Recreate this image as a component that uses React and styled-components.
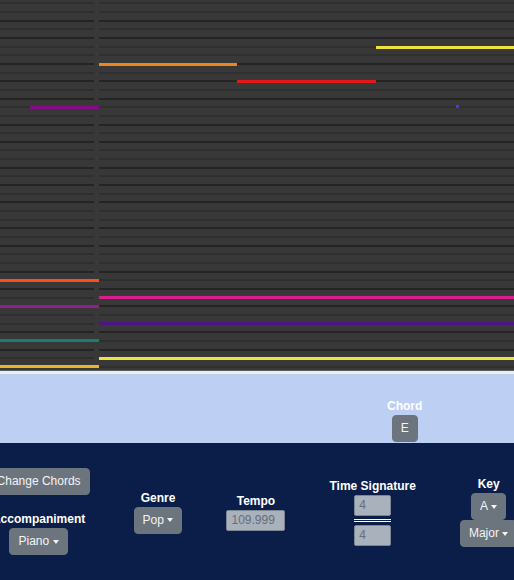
import React from "react";
import styled, { createGlobalStyle } from "styled-components";

const GlobalStyle = createGlobalStyle`
  html, body { margin: 0; padding: 0; background: #0b1e4a; overflow: hidden; }
  body { font-family: "Liberation Sans", Arial, sans-serif; }
  * { box-sizing: border-box; }
`;

const Page = styled.div`
  width: 514px;
  display: flex;
  flex-direction: column;
`;

const Roll = styled.div`
  position: relative;
  height: 370px;
  overflow: hidden;
  background: #383838;
  display: flex;
  gap: 5px;
`;

const Pane = styled.div`
  width: ${(p) => (p.$w ? `${p.$w}px` : "auto")};
  flex: ${(p) => (p.$w ? "none" : "1")};
  display: flex;
  flex-direction: column;
  margin-top: -1px;
`;

const Lane = styled.div`
  height: 8.6667px;
  flex-shrink: 0;
  display: flex;
  align-items: center;
  &::after {
    content: "";
    width: 100%;
    height: 2px;
    background: ${(p) => (p.$black ? "#242424" : "#2f2f2f")};
  }
`;

const Note = styled.div`
  position: absolute;
  height: 3px;
  background: ${(p) => p.$color};
`;

const Divider = styled.div`
  height: 4px;
  background: #eceef1;
  border-top: 1px solid #5a5a5a;
`;

const ChordBand = styled.div`
  height: 69px;
  background: #bdd0f4;
  display: flex;
  align-items: flex-end;
  padding-left: 387px;
  padding-bottom: 1px;
`;

const Panel = styled.div`
  height: 137px;
  background: #0b1e4a;
  display: flex;
  align-items: center;
  justify-content: center;
  gap: 44px;
  padding-right: 9px;
  overflow: hidden;
`;

const Field = styled.div`
  display: flex;
  flex-direction: column;
  align-items: center;
  flex-shrink: 0;
`;

const Label = styled.div`
  font-weight: 700;
  font-size: 12px;
  line-height: 16px;
  color: #fff;
  margin-top: ${(p) => p.$top || 0}px;
  margin-bottom: 1px;
  white-space: nowrap;
`;

const Button = styled.button`
  background: #6c757d;
  color: #f4f4f4;
  border: 1px solid #6c757d;
  border-radius: 4px;
  font-family: inherit;
  font-size: 12px;
  line-height: 17px;
  padding: 4px 8px;
  white-space: nowrap;
  display: inline-flex;
  align-items: center;
  cursor: pointer;
`;

const Caret = styled.span`
  display: inline-block;
  margin-left: 3.5px;
  width: 0;
  height: 0;
  border-top: 4px solid #f4f4f4;
  border-left: 3.5px solid transparent;
  border-right: 3.5px solid transparent;
`;

const Input = styled.input`
  width: ${(p) => p.$w}px;
  height: 21px;
  background: #a9b1bd;
  border: 1px solid #7d8794;
  border-radius: 2px;
  font-family: inherit;
  font-size: 12px;
  color: #676d75;
  padding: 0 4px;
  outline: none;
`;

const FractionBar = styled.div`
  width: 37px;
  height: 3px;
  border-top: 1px solid #fff;
  border-bottom: 1px solid #fff;
  margin: 3px 0;
`;

const ROWS = 43;
const BLACK = new Set([2, 4, 7, 9, 11]);

const notes = [
  { x: 30, y: 105.5, w: 69, c: "#860c86" },
  { x: 99, y: 62.5, w: 138, c: "#f0841e" },
  { x: 237, y: 79.5, w: 139, c: "#e31919" },
  { x: 376, y: 45.5, w: 138, c: "#f0e23c" },
  { x: 456, y: 104.5, w: 3, c: "#4040d8" },
  { x: 0, y: 278.5, w: 99, c: "#fb4f14" },
  { x: 99, y: 295.5, w: 415, c: "#d81e8a" },
  { x: 0, y: 304.5, w: 99, c: "#921f8e" },
  { x: 99, y: 321.5, w: 415, c: "#4f1484" },
  { x: 0, y: 339, w: 99, c: "#1b7d6e" },
  { x: 99, y: 356.5, w: 415, c: "#e8e63a" },
  { x: 0, y: 364.5, w: 99, c: "#e9b42e" },
];

function Lanes() {
  return Array.from({ length: ROWS }, (_, k) => (
    <Lane key={k} $black={BLACK.has(k % 12)} />
  ));
}

export default function App() {
  return (
    <Page>
      <GlobalStyle />
      <Roll>
        <Pane $w={94}>
          <Lanes />
        </Pane>
        <Pane>
          <Lanes />
        </Pane>
        {notes.map((n, i) => (
          <Note
            key={i}
            $color={n.c}
            style={{ left: n.x, top: n.y, width: n.w }}
          />
        ))}
      </Roll>
      <Divider />
      <ChordBand>
        <Field>
          <Label>Chord</Label>
          <Button>E</Button>
        </Field>
      </ChordBand>
      <Panel>
        <Field>
          <Button>Change Chords</Button>
          <Label $top={16}>Accompaniment</Label>
          <Button>
            Piano<Caret />
          </Button>
        </Field>
        <Field>
          <Label>Genre</Label>
          <Button>
            Pop<Caret />
          </Button>
        </Field>
        <Field>
          <Label>Tempo</Label>
          <Input $w={59} value="109.999" readOnly />
        </Field>
        <Field>
          <Label>Time Signature</Label>
          <Input $w={37} value="4" readOnly />
          <FractionBar />
          <Input $w={37} value="4" readOnly />
        </Field>
        <Field>
          <Label>Key</Label>
          <Button>
            A<Caret />
          </Button>
          <Button>
            Major<Caret />
          </Button>
        </Field>
      </Panel>
    </Page>
  );
}
